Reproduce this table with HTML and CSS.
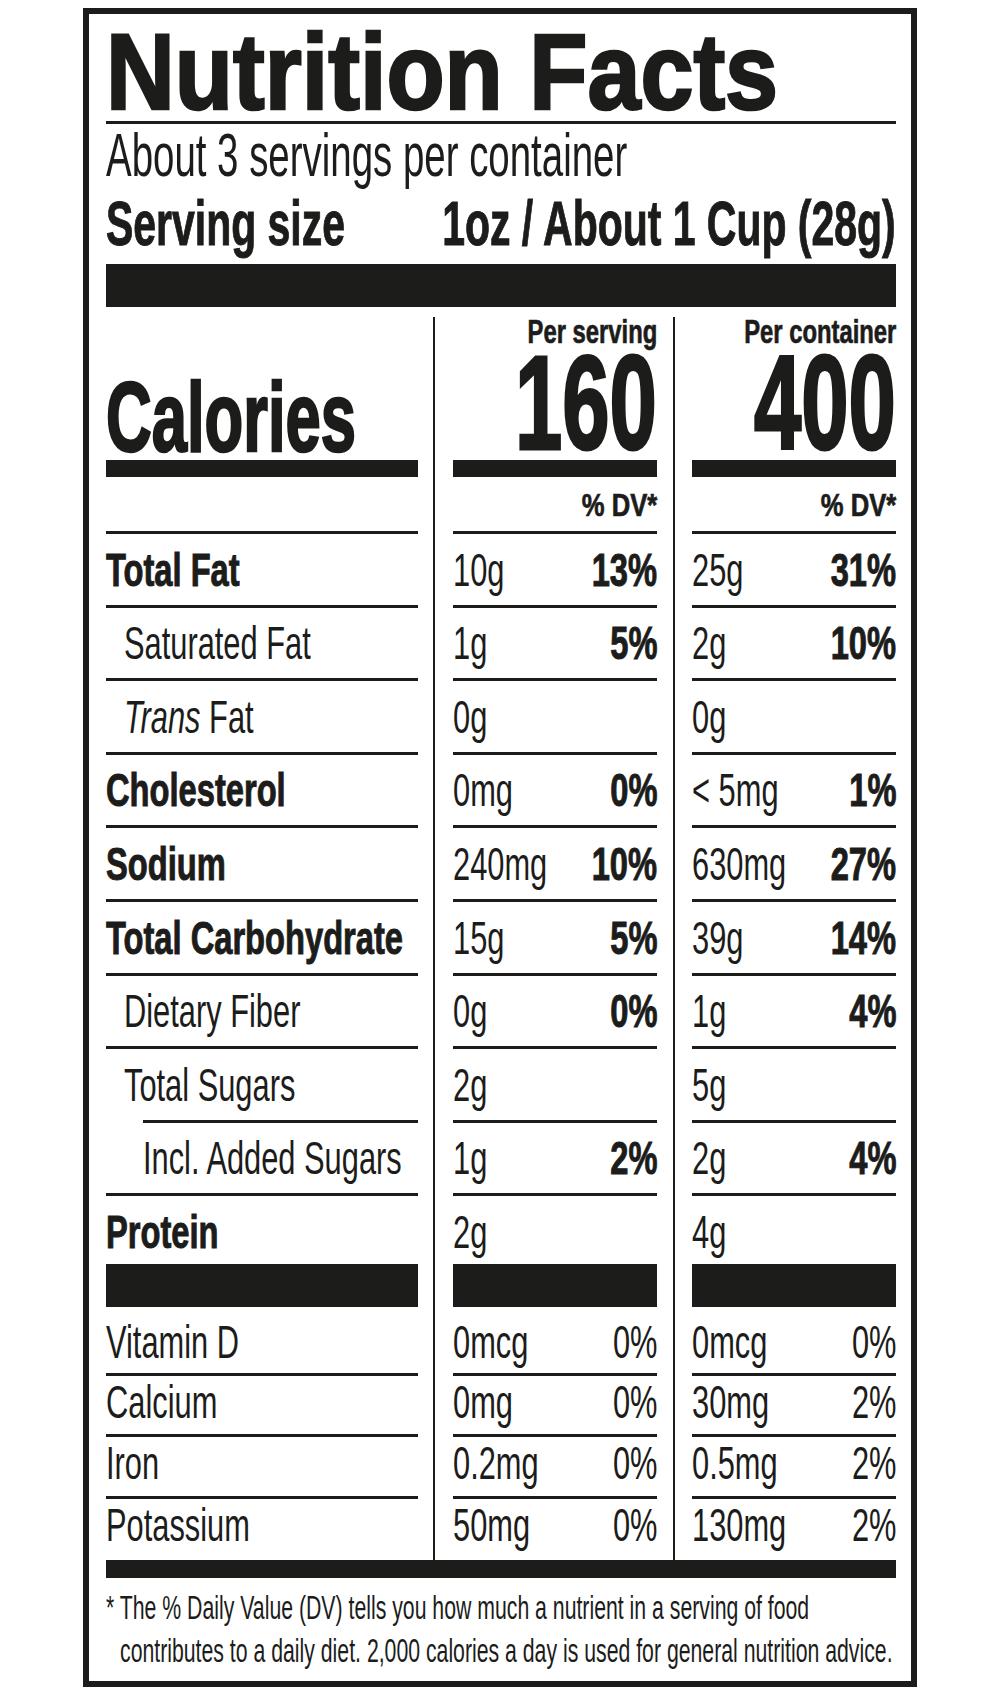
FILE: index.html
```html
<!DOCTYPE html>
<html lang="en">
<head>
<meta charset="utf-8">
<title>Nutrition Facts</title>
<link rel="stylesheet" href="styles.css">
</head>
<body>
<div class="label">
  <div class="title"><span class="t">Nutrition Facts</span></div>
  <div class="rule"></div>
  <div class="servings"><span class="t">About 3 servings per container</span></div>
  <div class="size"><span class="t">Serving size</span><span class="t tr">1oz / About 1 Cup (28g)</span></div>
  <div class="bar-thick"></div>

  <div class="grid">
    <div class="cal-head"><span class="t">Calories</span></div>
    <div class="col-head"><span class="per t tr">Per serving</span><span class="big t tr">160</span></div>
    <div class="col-head"><span class="per t tr">Per container</span><span class="big t tr">400</span></div>

    <div class="dv"></div>
    <div class="dv"><span class="t tr">% DV*</span></div>
    <div class="dv"><span class="t tr">% DV*</span></div>

    <div class="cell"><span class="t b">Total Fat</span></div>
    <div class="cell val"><span class="t">10g</span><span class="t tr b">13%</span></div>
    <div class="cell val"><span class="t">25g</span><span class="t tr b">31%</span></div>

    <div class="cell ind"><span class="t">Saturated Fat</span></div>
    <div class="cell val"><span class="t">1g</span><span class="t tr b">5%</span></div>
    <div class="cell val"><span class="t">2g</span><span class="t tr b">10%</span></div>

    <div class="cell ind"><span class="t"><i>Trans</i> Fat</span></div>
    <div class="cell val"><span class="t">0g</span></div>
    <div class="cell val"><span class="t">0g</span></div>

    <div class="cell"><span class="t b">Cholesterol</span></div>
    <div class="cell val"><span class="t">0mg</span><span class="t tr b">0%</span></div>
    <div class="cell val"><span class="t">&lt; 5mg</span><span class="t tr b">1%</span></div>

    <div class="cell"><span class="t b">Sodium</span></div>
    <div class="cell val"><span class="t">240mg</span><span class="t tr b">10%</span></div>
    <div class="cell val"><span class="t">630mg</span><span class="t tr b">27%</span></div>

    <div class="cell"><span class="t b">Total Carbohydrate</span></div>
    <div class="cell val"><span class="t">15g</span><span class="t tr b">5%</span></div>
    <div class="cell val"><span class="t">39g</span><span class="t tr b">14%</span></div>

    <div class="cell ind"><span class="t">Dietary Fiber</span></div>
    <div class="cell val"><span class="t">0g</span><span class="t tr b">0%</span></div>
    <div class="cell val"><span class="t">1g</span><span class="t tr b">4%</span></div>

    <div class="cell ind"><span class="t">Total Sugars</span></div>
    <div class="cell val"><span class="t">2g</span></div>
    <div class="cell val"><span class="t">5g</span></div>

    <div class="cell ind2"><span class="t">Incl. Added Sugars</span></div>
    <div class="cell val"><span class="t">1g</span><span class="t tr b">2%</span></div>
    <div class="cell val"><span class="t">2g</span><span class="t tr b">4%</span></div>

    <div class="cell protein"><span class="t b">Protein</span></div>
    <div class="cell protein val"><span class="t">2g</span></div>
    <div class="cell protein val"><span class="t">4g</span></div>

    <div class="cell vit-first"><span class="t">Vitamin D</span></div>
    <div class="cell vit-first val"><span class="t">0mcg</span><span class="t tr">0%</span></div>
    <div class="cell vit-first val"><span class="t">0mcg</span><span class="t tr">0%</span></div>

    <div class="cell vit"><span class="t">Calcium</span></div>
    <div class="cell vit val"><span class="t">0mg</span><span class="t tr">0%</span></div>
    <div class="cell vit val"><span class="t">30mg</span><span class="t tr">2%</span></div>

    <div class="cell vit"><span class="t">Iron</span></div>
    <div class="cell vit val"><span class="t">0.2mg</span><span class="t tr">0%</span></div>
    <div class="cell vit val"><span class="t">0.5mg</span><span class="t tr">2%</span></div>

    <div class="cell vit-last"><span class="t">Potassium</span></div>
    <div class="cell vit-last val"><span class="t">50mg</span><span class="t tr">0%</span></div>
    <div class="cell vit-last val"><span class="t">130mg</span><span class="t tr">2%</span></div>
  </div>

  <div class="bar-bottom"></div>
  <div class="foot">
    <div class="fn1"><span class="t">* The % Daily Value (DV) tells you how much a nutrient in a serving of food</span></div>
    <div class="fn2"><span class="t">contributes to a daily diet. 2,000 calories a day is used for general nutrition advice.</span></div>
  </div>
</div>
</body>
</html>
```

FILE: styles.css
```css
:root {
  --ink: #1c1c1b;
}

html, body {
  margin: 0;
  padding: 0;
  overflow: hidden;
  background: #ffffff;
}

body {
  font-family: "Liberation Sans", Arial, sans-serif;
  color: var(--ink);
}

.label {
  box-sizing: border-box;
  width: 834px;
  height: 1679px;
  margin: 8px auto 0;
  border: 6px solid var(--ink);
  padding: 0 15px 0 17px;
  overflow: hidden;
}

/* condensed text: horizontally compressed glyphs */
.t {
  display: inline-block;
  white-space: nowrap;
  transform: scaleX(var(--sx, 0.67));
  transform-origin: 0 50%;
}
.tr {
  transform-origin: 100% 50%;
}
.t i {
  font-style: italic;
}

.title {
  box-sizing: border-box;
  height: 107px;
  padding-top: 8px;
  font-size: 108px;
  line-height: 99px;
  font-weight: 700;
}
.title .t {
  --sx: 0.882;
  -webkit-text-stroke: 2.6px var(--ink);
}

.rule {
  height: 3px;
  background: var(--ink);
}

.servings {
  font-size: 61px;
  line-height: 63px;
}
.servings .t {
  --sx: 0.63;
}

.size {
  display: grid;
  grid-template-columns: minmax(0, 1fr);
  font-size: 63px;
  line-height: 72px;
  font-weight: 700;
}
.size > .t {
  grid-area: 1 / 1;
  justify-self: start;
  --sx: 0.65;
  -webkit-text-stroke: 1px var(--ink);
}
.size > .tr {
  justify-self: end;
}

.bar-thick {
  height: 43px;
  margin-top: 5px;
  background: var(--ink);
}

.grid {
  display: grid;
  grid-template-columns: 312px 204px 204px;
  column-gap: 35px;
  background:
    linear-gradient(var(--ink), var(--ink)) 327px 10px / 2px calc(100% - 10px) no-repeat,
    linear-gradient(var(--ink), var(--ink)) 567px 10px / 2px calc(100% - 10px) no-repeat;
}

.cal-head {
  box-sizing: border-box;
  height: 170px;
  border-bottom: 17px solid var(--ink);
  padding-top: 66.7px;
  font-size: 99px;
  line-height: 86px;
  font-weight: 700;
}
.cal-head .t {
  --sx: 0.64;
  -webkit-text-stroke: 2.6px var(--ink);
}

.col-head {
  box-sizing: border-box;
  height: 170px;
  border-bottom: 17px solid var(--ink);
  padding-top: 7.2px;
  display: grid;
  grid-template-columns: minmax(0, 1fr);
  justify-items: end;
  align-content: start;
  font-weight: 700;
}
.per {
  font-size: 34px;
  line-height: 34px;
  --sx: 0.7;
  -webkit-text-stroke: 0.7px var(--ink);
}
.big {
  font-size: 133px;
  line-height: 111.4px;
  --sx: 0.64;
  -webkit-text-stroke: 3px var(--ink);
}

.dv {
  box-sizing: border-box;
  height: 54px;
  padding-top: 11.9px;
  display: grid;
  grid-template-columns: minmax(0, 1fr);
  justify-items: end;
  font-size: 32px;
  line-height: 32px;
  font-weight: 700;
}
.dv .t {
  --sx: 0.8;
  -webkit-text-stroke: 0.7px var(--ink);
}

.cell {
  box-sizing: border-box;
  height: 73.6px;
  border-top: 3px solid var(--ink);
  padding-top: 12.6px;
  font-size: 46px;
  line-height: 46px;
}

.val {
  display: grid;
  grid-template-columns: minmax(0, 1fr);
  align-content: start;
}
.val > .t {
  grid-area: 1 / 1;
  justify-self: start;
}
.val > .tr {
  justify-self: end;
}

.b {
  font-weight: 700;
  --sx: 0.71;
  -webkit-text-stroke: 1px var(--ink);
}

.ind {
  padding-left: 18px;
}
.ind2 {
  margin-left: 37px;
}

.protein {
  height: 113.5px;
  border-bottom: 43px solid var(--ink);
}

.vit-first {
  height: 66px;
  border-top: 0;
  padding-top: 12.1px;
}
.vit {
  height: 61.5px;
  padding-top: 3.1px;
}
.vit-last {
  height: 64.5px;
  padding-top: 3.1px;
}

.bar-bottom {
  height: 17.5px;
  background: var(--ink);
}

.foot {
  padding-top: 7.7px;
  font-size: 34px;
  line-height: 43px;
}
.foot .t {
  --sx: 0.625;
}
.fn2 {
  padding-left: 14px;
}
```
